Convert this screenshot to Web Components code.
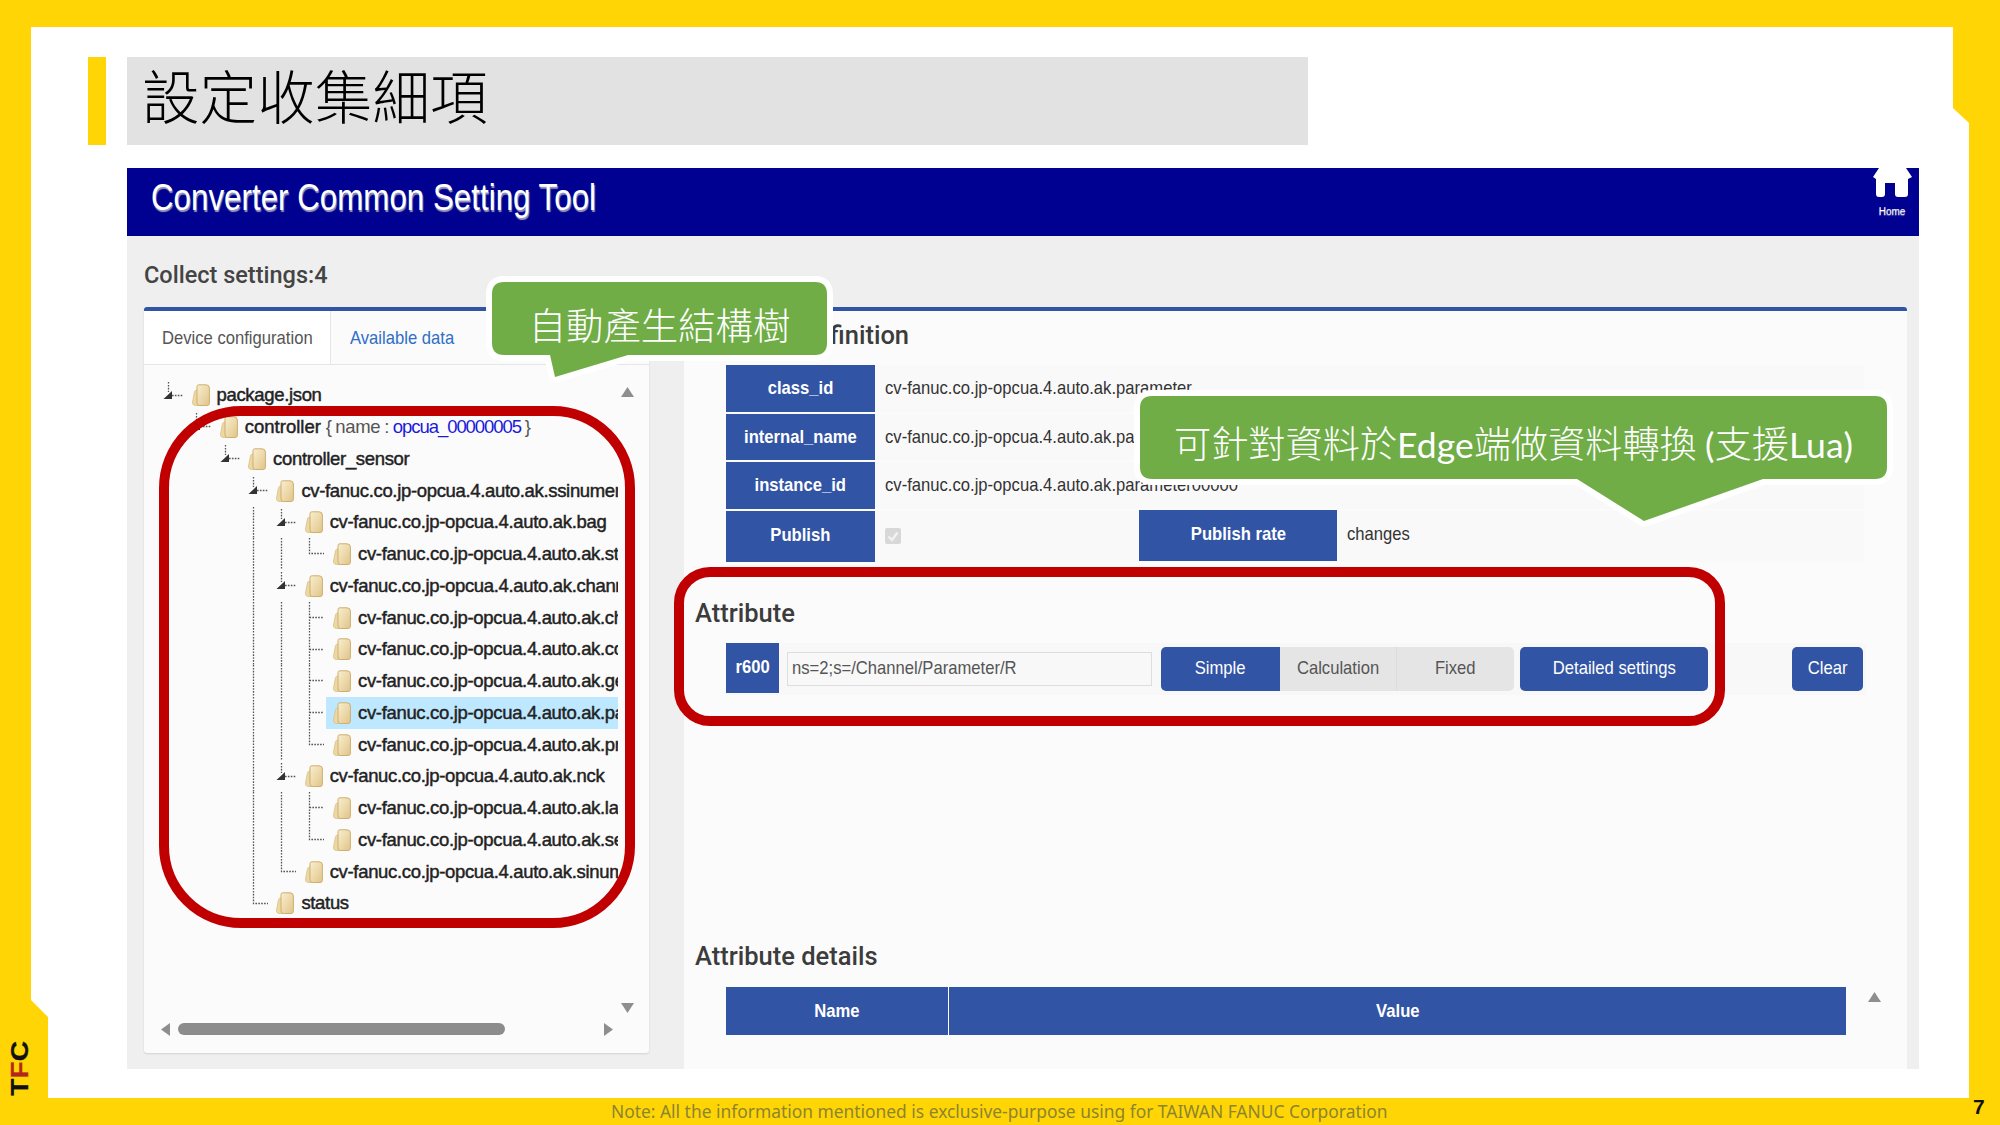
<!DOCTYPE html>
<html lang="zh-Hant">
<head>
<meta charset="utf-8">
<title>設定收集細項</title>
<style>
  html, body { margin: 0; padding: 0; background: #FFD505; }
  body { width: 2000px; height: 1125px; overflow: hidden; font-family: "Liberation Sans", "Noto Sans CJK TC", sans-serif; }
</style>
</head>
<body>
<slide-frame>
  <slide-title slot="title">設定收集細項</slide-title>
  <app-window slot="content"></app-window>
  <red-outline style="left:159px;top:406px;width:476px;height:522px;border-radius:82px"></red-outline>
  <red-outline style="left:674px;top:567px;width:1051px;height:159px;border-radius:36px"></red-outline>
  <call-out x="492" y="282" w="335" h="73" tip="550,628,555,377" pad="11" style="font-size:37.4px">自動產生結構樹</call-out>
  <call-out x="1140" y="396" w="747" h="83" tip="1577,1763,1644,521" pad="9" style="font-size:37.2px">可針對資料於<span style="font-family:Lato;font-size:35.5px;font-weight:400">Edge</span>端做資料轉換 <span style="font-family:Lato;font-size:35.5px;font-weight:400">(</span>支援<span style="font-family:Lato;font-size:35.5px;font-weight:400">Lua)</span></call-out>
</slide-frame>

<script>
// The screenshot is squeezed sideways, this keeps the same look for its texts
class NarText extends HTMLElement {
    constructor() {
        super();
        this.attachShadow({ mode: 'open' });
    }

    connectedCallback() {
        this.shadowRoot.innerHTML = `
            <style>
                :host {
                    display: inline-block;
                    white-space: nowrap;
                    transform: scaleX(var(--sx, .875));
                    transform-origin: var(--o, left) center;
                }
            </style>
            <slot></slot>
        `;
    }
}
customElements.define('nar-text', NarText);

// Slide frame: yellow band with bevelled white page
class SlideFrame extends HTMLElement {
    constructor() {
        super();
        this.attachShadow({ mode: 'open' });
    }

    connectedCallback() {
        this.shadowRoot.innerHTML = `
            <style>
                :host {
                    display: grid;
                    position: relative;
                    width: 2000px;
                    height: 1125px;
                    background: #FFD505;
                    grid-template-columns: 31px 1938px 31px;
                    grid-template-rows: 27px 1071px 27px;
                }
                .page {
                    grid-column: 2;
                    grid-row: 2;
                    background: #fff;
                    padding: 30px 0 0 57px;
                    box-sizing: border-box;
                    clip-path: polygon(0 0, 1922px 0, 1922px 81px, 1938px 96px, 1938px 1071px, 17px 1071px, 17px 990px, 0 973px);
                }
                .content { margin: 23px 0 0 39px; }
                .tfc {
                    grid-column: 1;
                    grid-row: 2;
                    align-self: end;
                    justify-self: center;
                    writing-mode: vertical-rl;
                    transform: rotate(180deg) scale(1, 1.17);
                    font: bold 24px/24px "Liberation Sans", sans-serif;
                    -webkit-text-stroke: .3px #111;
                    color: #111;
                    margin: 0 0 6px 8px;
                }
                .tfc span { color: #B5251A; -webkit-text-stroke-color: #B5251A; }
                footer {
                    grid-column: 1 / 4;
                    grid-row: 3;
                    display: grid;
                    grid-template-columns: 611px 1fr 40px;
                    align-items: center;
                    font-family: "Noto Sans", sans-serif;
                }
                .note { grid-column: 2; font-size: 17.4px; color: #8C8431; white-space: nowrap; margin-top: -2px; }
                .num { grid-column: 3; font: bold 21px "Liberation Sans", sans-serif; color: #111; margin: -10px 0 0 0; padding-left: 13px; }
            </style>
            <div class="tfc">T<span>F</span>C</div>
            <div class="page">
                <slot name="title"></slot>
                <div class="content"><slot name="content"></slot></div>
            </div>
            <footer>
                <div class="note">Note: All the information mentioned is exclusive-purpose using for TAIWAN FANUC Corporation</div>
                <div class="num">7</div>
            </footer>
            <slot></slot>
        `;
    }
}
customElements.define('slide-frame', SlideFrame);

// Slide title with its yellow accent bar
class SlideTitle extends HTMLElement {
    constructor() {
        super();
        this.attachShadow({ mode: 'open' });
    }

    connectedCallback() {
        this.shadowRoot.innerHTML = `
            <style>
                :host { display: flex; gap: 21px; height: 88px; }
                .bar { width: 18px; background: #FFD505; }
                .box {
                    width: 1181px;
                    background: #E2E2E2;
                    padding: 0 0 14px 15px;
                    box-sizing: border-box;
                    display: flex;
                    align-items: center;
                    font: 300 57.6px "Noto Sans CJK TC", sans-serif;
                    color: #000;
                }
            </style>
            <div class="bar"></div>
            <div class="box"><slot></slot></div>
        `;
    }
}
customElements.define('slide-title', SlideTitle);

// Red emphasis frame
class RedOutline extends HTMLElement {
    constructor() {
        super();
        this.attachShadow({ mode: 'open' });
    }

    connectedCallback() {
        this.shadowRoot.innerHTML = `
            <style>
                :host {
                    display: block;
                    position: absolute;
                    box-sizing: border-box;
                    border: 10px solid #C00000;
                    pointer-events: none;
                }
            </style>
        `;
    }
}
customElements.define('red-outline', RedOutline);

// Green speech bubble
class CallOut extends HTMLElement {
    constructor() {
        super();
        this.attachShadow({ mode: 'open' });
    }

    connectedCallback() {
        const x = +this.getAttribute('x');
        const y = +this.getAttribute('y');
        const w = +this.getAttribute('w');
        const h = +this.getAttribute('h');
        const pad = this.getAttribute('pad');
        const [a, b, tx, ty] = this.getAttribute('tip').split(',').map(Number);
        const r = 12;
        const d = `M${r} 0H${w - r}Q${w} 0 ${w} ${r}V${h - r}Q${w} ${h} ${w - r} ${h}`
            + `H${b - x}L${tx - x} ${ty - y}L${a - x} ${h}H${r}Q0 ${h} 0 ${h - r}V${r}Q0 0 ${r} 0Z`;
        this.shadowRoot.innerHTML = `
            <style>
                :host {
                    display: flex;
                    position: absolute;
                    left: ${x}px;
                    top: ${y}px;
                    width: ${w}px;
                    height: ${h}px;
                    align-items: center;
                    justify-content: center;
                    color: #fff;
                    font-family: "Noto Sans CJK TC", sans-serif;
                    font-weight: 300;
                    white-space: pre;
                }
                svg { position: absolute; left: 0; top: 0; overflow: visible; }
                div { position: relative; padding-top: ${pad}px; }
            </style>
            <svg width="${w}" height="${h}"><path d="${d}" fill="#70AD47" stroke="#fff" stroke-width="12" stroke-linejoin="round" paint-order="stroke"/></svg>
            <div><slot></slot></div>
        `;
    }
}
customElements.define('call-out', CallOut);

// Small grey scroll arrow
class ScrollArrow extends HTMLElement {
    constructor() {
        super();
        this.attachShadow({ mode: 'open' });
    }

    connectedCallback() {
        const shapes = {
            up: ['13', '10', '0,10 13,10 6.5,0'],
            down: ['13', '10', '0,0 13,0 6.5,10'],
            left: ['9', '13', '9,0 9,13 0,6.5'],
            right: ['9', '13', '0,0 0,13 9,6.5']
        };
        const [w, h, pts] = shapes[this.getAttribute('dir')];
        this.shadowRoot.innerHTML = `
            <style>:host { display: block; width: ${w}px; height: ${h}px; line-height: 0; }</style>
            <svg width="${w}" height="${h}"><polygon points="${pts}" fill="#8E8E8E"/></svg>
        `;
    }
}
customElements.define('scroll-arrow', ScrollArrow);

// One line of the device tree
class TreeRow extends HTMLElement {
    constructor() {
        super();
        this.attachShadow({ mode: 'open' });
    }

    cell(type) {
        const line = 'stroke="#555" stroke-width="1.3" stroke-dasharray="1.6 1.3" fill="none"';
        const shapes = {
            ' ': '',
            v: `<path d="M8.5 0V32" ${line}/>`,
            t: `<path d="M8.5 0V32M8.5 15.5H23" ${line}/>`,
            l: `<path d="M8.5 0V15.5H23" ${line}/>`,
            e: `<path d="M8.5 2V12M12 15.5H23" ${line}/><polygon points="3.5,19 12,19 12,11" fill="#333"/>`
        };
        return `<svg width="28.3" height="31.75">${shapes[type]}</svg>`;
    }

    connectedCallback() {
        const cells = [...(this.getAttribute('cells') || '')].map(c => this.cell(c)).join('');
        this.shadowRoot.innerHTML = `
            <style>
                :host { display: flex; height: 31.75px; align-items: stretch; white-space: nowrap; }
                .guides { display: flex; flex: none; }
                .guides svg { display: block; flex: none; }
                .node {
                    flex: 1;
                    min-width: 0;
                    display: flex;
                    align-items: center;
                    gap: 7px;
                    margin-left: -3.8px;
                    padding-left: 7px;
                    overflow: hidden;
                }
                :host([selected]) .node { background: #BDE8FF; }
                .icon { flex: none; display: block; }
                .text { flex: none; }
            </style>
            <div class="guides">${cells}</div>
            <div class="node">
                <svg class="icon" width="18" height="22" viewBox="0 0 18 22">
                    <defs>
                        <linearGradient id="f" x1="0" y1="0" x2="1" y2="1">
                            <stop offset="0" stop-color="#FAEFD0"/>
                            <stop offset="1" stop-color="#E0C488"/>
                        </linearGradient>
                    </defs>
                    <path d="M1 20.5Q0 20 .5 18L2.5 7.5Q3 6 5 6H9V21.5H3Z" fill="#EED8A2" stroke="#D6BC82" stroke-width=".7"/>
                    <path d="M5 2.5Q5 .8 7 .8H14Q17.4 .8 17.4 4V19.5Q17.4 21.5 15 21.5H7.5Q5 21.5 5 19Z" fill="url(#f)" stroke="#CDAF72" stroke-width="1"/>
                </svg>
                <span class="text"><slot></slot></span>
            </div>
        `;
    }
}
customElements.define('tree-row', TreeRow);

// Device configuration panel: tabs, tree, scrollbars
class TreePanel extends HTMLElement {
    constructor() {
        super();
        this.attachShadow({ mode: 'open' });
    }

    connectedCallback() {
        const p = 'cv-fanuc.co.jp-opcua.4.auto.ak.';
        const rows = [
            ['e', 'package.json'],
            [' e', '<b>controller</b> <u>{ name : </u><i>opcua_00000005</i><u> }</u>'],
            ['  e', 'controller_sensor'],
            ['   e', p + 'ssinumeric'],
            ['   ve', p + 'bag'],
            ['   vvl', p + 'state'],
            ['   ve', p + 'channel'],
            ['   vvt', p + 'channel_info'],
            ['   vvt', p + 'config'],
            ['   vvt', p + 'geometric'],
            ['   vvt', p + 'parameter', true],
            ['   vvl', p + 'program'],
            ['   ve', p + 'nck'],
            ['   vvt', p + 'language'],
            ['   vvl', p + 'setting'],
            ['   vl', p + 'sinumeric'],
            ['   l', 'status']
        ];
        const html = rows.map(([cells, label, sel]) =>
            `<tree-row cells="${cells}"${sel ? ' selected' : ''}>${label}</tree-row>`).join('');
        this.shadowRoot.innerHTML = `
            <style>
                :host {
                    display: block;
                    width: 505px;
                    height: 746px;
                    box-sizing: border-box;
                    background: #FBFBFB;
                    border-top: 4px solid #3254A4;
                    border-radius: 3px;
                    box-shadow: 0 1px 2px rgba(0,0,0,.12);
                    color: #333;
                }
                .tabs {
                    display: flex;
                    height: 54px;
                    border-bottom: 1px solid #E6E6EA;
                    box-sizing: border-box;
                    font-size: 19px;
                    --sx: .875;
                }
                .tab { display: flex; align-items: center; white-space: nowrap; }
                .tab.on { width: 187px; padding-left: 18px; box-sizing: border-box; background: #FFF; border-right: 1px solid #E6E6EA; color: #555; }
                .tab.off { padding-left: 19px; color: #2F6FC7; }
                .tree-area {
                    display: grid;
                    grid-template-columns: 458px 13px;
                    column-gap: 3px;
                    padding: 14.6px 0 0 16px;
                    height: 638.4px;
                }
                .tree {
                    overflow: hidden;
                    font-size: 18.5px;
                    letter-spacing: -.33px;
                    color: #222;
                    -webkit-text-stroke: .45px #222;
                }
                .tree b { font-weight: 400; letter-spacing: 0; }
                .tree u { text-decoration: none; color: #555; -webkit-text-stroke: 0; word-spacing: -1px; }
                .tree i { font-style: normal; color: #1A1ADB; -webkit-text-stroke: 0; letter-spacing: -1.05px; }
                .vbar { display: flex; flex-direction: column; justify-content: space-between; padding: 7.4px 0 5px; }
                .hbar {
                    display: flex;
                    align-items: center;
                    width: 453px;
                    margin: 5px 0 0 16px;
                    padding-left: 1px;
                    box-sizing: border-box;
                    gap: 8px;
                    height: 13px;
                }
                .thumb { width: 327px; height: 12px; border-radius: 6px; background: #8C8C8C; }
                .hbar scroll-arrow:last-child { margin-left: auto; }
            </style>
            <div class="tabs">
                <div class="tab on"><nar-text>Device configuration</nar-text></div>
                <div class="tab off"><nar-text>Available data</nar-text></div>
            </div>
            <div class="tree-area">
                <div class="tree">${html}</div>
                <div class="vbar"><scroll-arrow dir="up"></scroll-arrow><scroll-arrow dir="down"></scroll-arrow></div>
            </div>
            <div class="hbar">
                <scroll-arrow dir="left"></scroll-arrow>
                <div class="thumb"></div>
                <scroll-arrow dir="right"></scroll-arrow>
            </div>
        `;
    }
}
customElements.define('tree-panel', TreePanel);

// Definition row: blue label cell and a value
class DefRow extends HTMLElement {
    constructor() {
        super();
        this.attachShadow({ mode: 'open' });
    }

    connectedCallback() {
        this.shadowRoot.innerHTML = `
            <style>
                :host {
                    display: flex;
                    background: #F9F9F9;
                    align-items: stretch;
                    font-size: 19px;
                    color: #333;
                    height: var(--h, 46px);
                }
                .label {
                    flex: none;
                    width: 149px;
                    display: flex;
                    align-items: center;
                    justify-content: center;
                    background: #3254A4;
                    color: #fff;
                    font-weight: bold;
                    padding-bottom: var(--lift, 1px);
                    box-sizing: border-box;
                    --o: center;
                }
                .value { flex: 1; display: flex; align-items: center; padding: 0 0 var(--lift, 1px) 10px; white-space: nowrap; }
            </style>
            <div class="label"><nar-text>${this.getAttribute('label')}</nar-text></div>
            <div class="value"><slot></slot></div>
        `;
    }
}
customElements.define('def-row', DefRow);

// Right hand panel
class DefinitionPanel extends HTMLElement {
    constructor() {
        super();
        this.attachShadow({ mode: 'open' });
    }

    connectedCallback() {
        this.shadowRoot.innerHTML = `
            <style>
                :host {
                    display: block;
                    width: 1223px;
                    height: 762px;
                    box-sizing: border-box;
                    background: #FBFBFB;
                    border-top: 4px solid #3254A4;
                    border-radius: 3px 3px 0 0;
                    font-size: 19px;
                }
                h2 { font: 500 25.5px/30px Roboto, sans-serif; color: #3C3C3C; margin: 0 0 0 11px; white-space: nowrap; }
                .h-def { padding-top: 9px; margin-bottom: 15px; }
                .h-def span { letter-spacing: -1.1px; }
                .h-attr { padding-top: 36px; margin-bottom: 15px; }
                .h-det { padding-top: 246px; margin-bottom: 16px; }
                .defs { display: grid; gap: 2px; width: 1138px; margin-left: 42px; }
                .check { width: 16px; height: 16px; border-radius: 2px; background: #D8D8D8; line-height: 0; margin-top: 2px; }
                .publish { display: flex; align-items: center; flex: 1; }
                .mid { margin-left: 238px; display: flex; align-items: center; }
                .rate {
                    display: flex; align-items: center; height: 51px; padding-bottom: 3px; box-sizing: border-box;
                    width: 198px; justify-content: center; background: #3254A4; color: #fff; font-weight: bold; --o: center;
                }
                .val { margin: -3px 0 0 10px; color: #333; }
                .attr {
                    display: flex;
                    align-items: center;
                    height: 52px;
                    width: 1140px;
                    margin-left: 42px;
                    background: #F8F8F8;
                    padding-right: 3px;
                    box-sizing: border-box;
                }
                .attr nar-text { margin-top: -2px; }
                .tag {
                    width: 53px; height: 50px; align-self: flex-start; display: flex;
                    align-items: center; justify-content: center;
                    background: #3254A4; color: #fff; font-weight: bold; --o: center;
                }
                .input {
                    width: 365px; height: 34px; margin-left: 8px; box-sizing: border-box;
                    background: #F8F8F8; border: 1px solid #DDD; padding-left: 4px;
                    display: flex; align-items: center; color: #555;
                }
                .group { display: flex; margin-left: 9px; height: 44px; border-radius: 5px; overflow: hidden; }
                .btn { display: flex; align-items: center; justify-content: center; height: 44px; color: #fff; background: #3254A4; --o: center; }
                .grey { background: #E5E5E5; color: #555; }
                .grey + .grey { border-left: 1px solid #DCDCDC; }
                .solo { border-radius: 5px; }
                .details { display: flex; width: 1154px; margin-left: 42px; }
                .thead { display: flex; width: 1120px; height: 48px; color: #fff; font-weight: bold; flex: none; --o: center; }
                .thead div { display: flex; align-items: center; justify-content: center; background: #3254A4; }
                .thead .name { width: 223px; border-right: 1px solid #fff; box-sizing: border-box; }
                .thead .cell { flex: 1; }
                .details scroll-arrow { margin: 5px 0 0 22px; }
            </style>
            <h2 class="h-def"><span>Collection de</span>finition</h2>
            <div class="defs">
                <def-row label="class_id" style="--h:47px"><nar-text>cv-fanuc.co.jp-opcua.4.auto.ak.parameter</nar-text></def-row>
                <def-row label="internal_name" style="--lift:0px"><nar-text>cv-fanuc.co.jp-opcua.4.auto.ak.parameter</nar-text></def-row>
                <def-row label="instance_id" style="--h:47px"><nar-text>cv-fanuc.co.jp-opcua.4.auto.ak.parameter00000</nar-text></def-row>
                <def-row label="Publish" style="--h:51px;--lift:3px">
                    <div class="publish">
                        <div class="check"><svg width="16" height="16"><path d="M3.5 8.5L7 12L12.5 4.5" stroke="#F2F2F2" stroke-width="2.4" fill="none"/></svg></div>
                        <div class="mid"><div class="rate"><nar-text>Publish rate</nar-text></div><div class="val"><nar-text>changes</nar-text></div></div>
                    </div>
                </def-row>
            </div>
            <h2 class="h-attr">Attribute</h2>
            <div class="attr">
                <div class="tag"><nar-text>r600</nar-text></div>
                <div class="input"><nar-text>ns=2;s=/Channel/Parameter/R</nar-text></div>
                <div class="group">
                    <div class="btn" style="width:119px"><nar-text>Simple</nar-text></div>
                    <div class="btn grey" style="width:116px"><nar-text>Calculation</nar-text></div>
                    <div class="btn grey" style="width:117px"><nar-text>Fixed</nar-text></div>
                </div>
                <div class="btn solo" style="width:188px;margin-left:6px"><nar-text>Detailed settings</nar-text></div>
                <div class="btn solo" style="width:71px;margin-left:auto"><nar-text>Clear</nar-text></div>
            </div>
            <h2 class="h-det">Attribute details</h2>
            <div class="details">
                <div class="thead">
                    <div class="name"><nar-text>Name</nar-text></div>
                    <div class="cell"><nar-text>Value</nar-text></div>
                </div>
                <scroll-arrow dir="up"></scroll-arrow>
            </div>
        `;
    }
}
customElements.define('definition-panel', DefinitionPanel);

// Converter Common Setting Tool window
class AppWindow extends HTMLElement {
    constructor() {
        super();
        this.attachShadow({ mode: 'open' });
    }

    connectedCallback() {
        this.shadowRoot.innerHTML = `
            <style>
                :host { display: block; width: 1792px; height: 901px; background: #EFEFEF; }
                header {
                    height: 68px;
                    background: #000091;
                    display: flex;
                    justify-content: space-between;
                    padding: 0 7px 0 24px;
                    color: #fff;
                }
                h1 {
                    margin: 0;
                    align-self: center;
                    padding-bottom: 8px;
                    font: 36px "Liberation Sans", sans-serif;
                    text-shadow: 1px 2px 1px #9A9AB8;
                    --sx: .87;
                }
                .home { display: flex; flex-direction: column; align-items: center; width: 40px; }
                .home svg { display: block; }
                .home span { font: 10px "Liberation Sans", sans-serif; margin-top: 8px; text-shadow: 0 1px 1px #8888AA; }
                .sub {
                    height: 71px;
                    box-sizing: border-box;
                    padding: 24px 0 0 17px;
                    font: 500 23.5px/30px Roboto, sans-serif;
                    color: #444;
                }
                .cols { display: flex; gap: 35px; padding-left: 17px; align-items: flex-start; }
            </style>
            <header>
                <h1><nar-text>Converter Common Setting Tool</nar-text></h1>
                <div class="home">
                    <svg width="39" height="30" viewBox="0 0 39 30">
                        <path d="M6 0H33L39 9L35 11V26Q35 29 32 29H25Q22 29 22 26V15H12V26Q12 29 9 29H6Q3 29 3 26V11L0 9Z" fill="#fff"/>
                    </svg>
                    <span>Home</span>
                </div>
            </header>
            <div class="sub">Collect settings:4</div>
            <div class="cols">
                <tree-panel></tree-panel>
                <definition-panel></definition-panel>
            </div>
        `;
    }
}
customElements.define('app-window', AppWindow);
</script>
</body>
</html>
